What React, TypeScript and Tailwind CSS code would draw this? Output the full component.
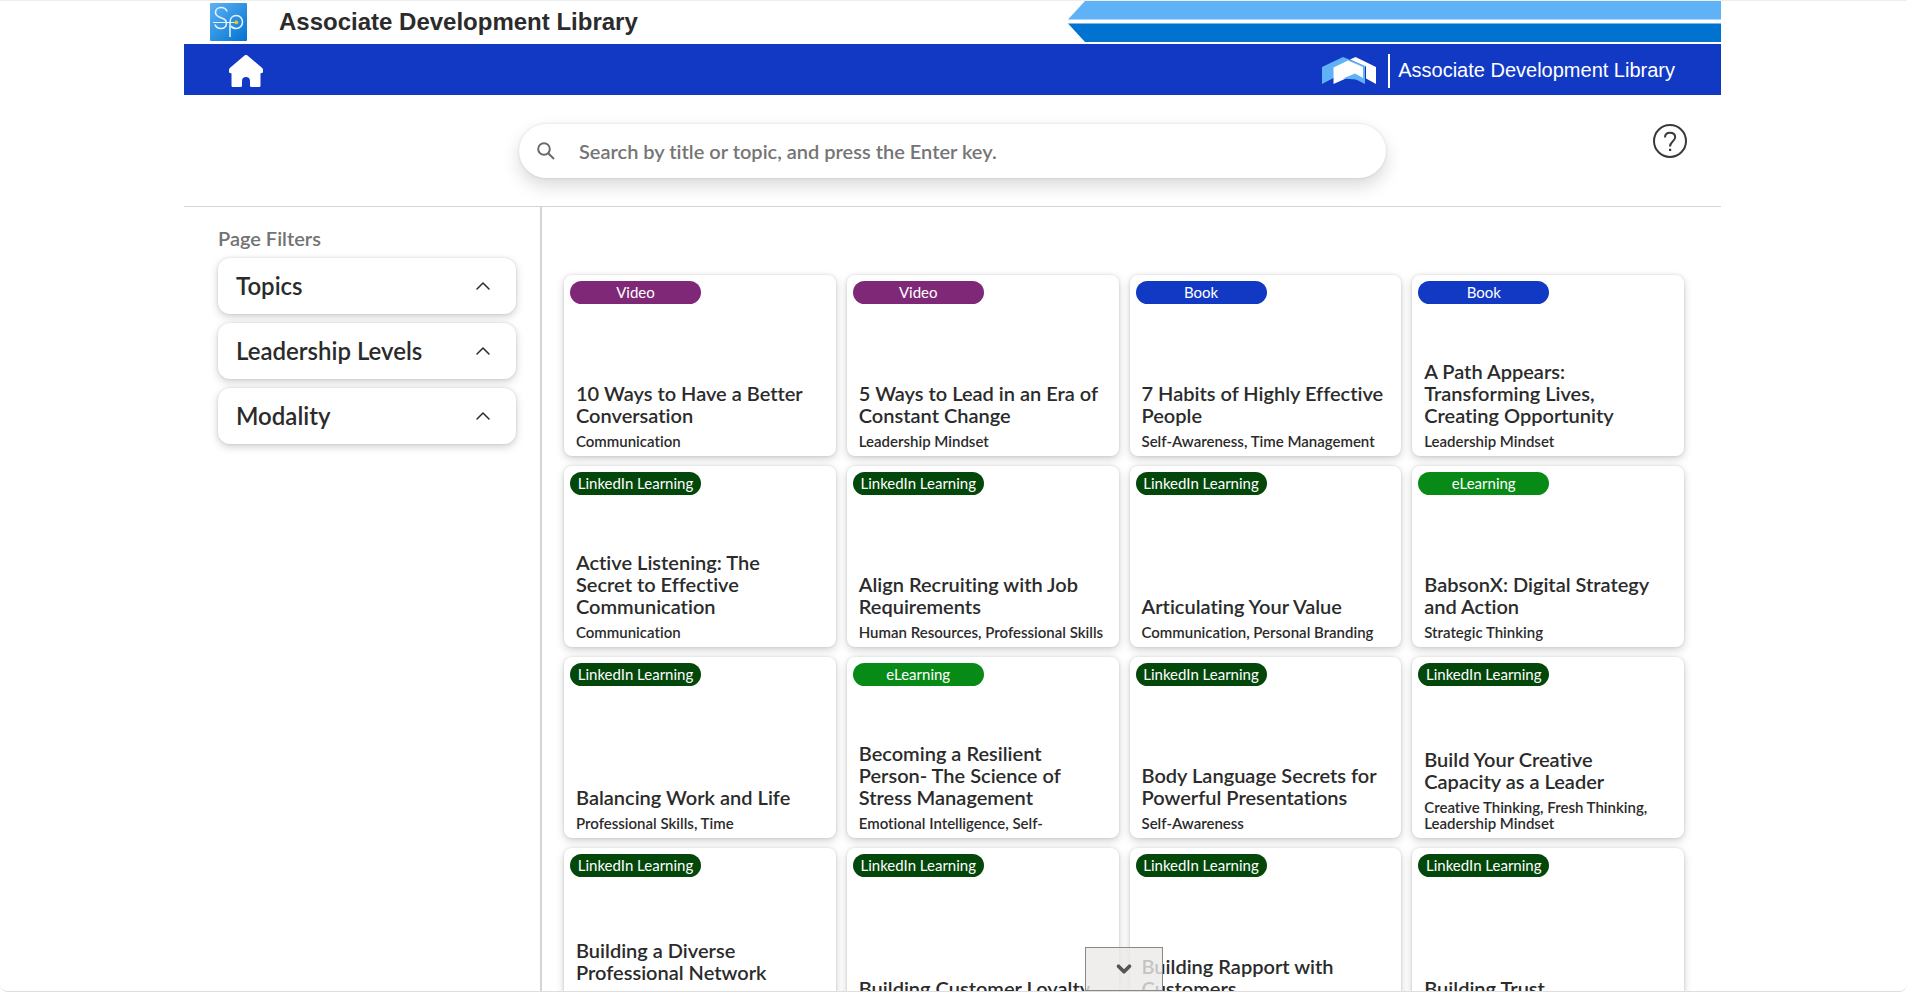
import { ChevronDown, ChevronUp } from "lucide-react";

type Resource = {
    type: "Video" | "Book" | "LinkedIn Learning" | "eLearning";
    title: string;
    topics: string;
    tallTopics?: boolean;
};

const badgeColors = {
    "Video": "bg-[#7f2877]",
    "Book": "bg-[#1239c4]",
    "LinkedIn Learning": "bg-[#04470b]",
    "eLearning": "bg-[#088a17]",
};

const filters = ["Topics", "Leadership Levels", "Modality"];

const resources: Resource[] = [
    { type: "Video", title: "10 Ways to Have a Better Conversation", topics: "Communication" },
    { type: "Video", title: "5 Ways to Lead in an Era of Constant Change", topics: "Leadership Mindset" },
    { type: "Book", title: "7 Habits of Highly Effective People", topics: "Self-Awareness, Time Management" },
    { type: "Book", title: "A Path Appears: Transforming Lives, Creating Opportunity", topics: "Leadership Mindset" },
    { type: "LinkedIn Learning", title: "Active Listening: The Secret to Effective Communication", topics: "Communication" },
    { type: "LinkedIn Learning", title: "Align Recruiting with Job Requirements", topics: "Human Resources, Professional Skills" },
    { type: "LinkedIn Learning", title: "Articulating Your Value", topics: "Communication, Personal Branding" },
    { type: "eLearning", title: "BabsonX: Digital Strategy and Action", topics: "Strategic Thinking" },
    { type: "LinkedIn Learning", title: "Balancing Work and Life", topics: "Professional Skills, Time" },
    { type: "eLearning", title: "Becoming a Resilient Person- The Science of Stress Management", topics: "Emotional Intelligence, Self-" },
    { type: "LinkedIn Learning", title: "Body Language Secrets for Powerful Presentations", topics: "Self-Awareness" },
    { type: "LinkedIn Learning", title: "Build Your Creative Capacity as a Leader", topics: "Creative Thinking, Fresh Thinking, Leadership Mindset" },
    { type: "LinkedIn Learning", title: "Building a Diverse Professional Network", topics: "", tallTopics: true },
    { type: "LinkedIn Learning", title: "Building Customer Loyalty", topics: "" },
    { type: "LinkedIn Learning", title: "Building Rapport with Customers", topics: "" },
    { type: "LinkedIn Learning", title: "Building Trust", topics: "" },
];

const SpLogo = () => (
    <svg width="37" height="38" viewBox="0 0 37 38" fill="none" aria-hidden="true">
        <defs>
            <linearGradient id="sp" x1="0" y1="0" x2="1" y2="1">
                <stop offset="0" stopColor="#5fb2f5" />
                <stop offset="1" stopColor="#0073d0" />
            </linearGradient>
        </defs>
        <rect width="37" height="38" rx="1" fill="url(#sp)" />
        <g stroke="#e3f2fd" strokeWidth="1.6">
            <path d="M17 8.500C16 5.500 13.500 4.500 11 4.500C7.500 4.500 5.500 7 5.500 9.500C5.500 13 8.500 14 11.500 15C14.500 16 16.500 17.500 16.500 20C16.500 23.500 14 25.500 11 25.500C8 25.500 6 24.500 5 21.500" />
            <path d="M20 34V19.500C20 15.500 22.500 12.500 26.200 12.500C30 12.500 32.500 15.500 32.500 19C32.500 22.500 30 25.500 26.200 25.500C24 25.500 22 24.500 21 23" />
            <path d="M3 19.500H25" strokeWidth="1.200" />
        </g>
        <circle cx="26.300" cy="19.300" r="1.900" fill="#ffc20e" />
    </svg>
);

const HomeIcon = () => (
    <svg width="34" height="32" viewBox="0 0 34 32" fill="#fff" aria-hidden="true">
        <path d="M15.500 0.600a2.200 2.200 0 0 1 3 0L33.200 13c.6.500.8 1.200.8 2v1.500c0 1-.7 1.700-1.700 1.700H31.500V30.500c0 1-.6 1.500-1.500 1.500H22.500c-.9 0-1.500-.6-1.500-1.500V26c0-2.500-1.500-4-4-4s-4 1.500-4 4v4.500c0 .9-.6 1.500-1.500 1.500H4c-.9 0-1.500-.5-1.500-1.500V18.200H1.700C.7 18.200 0 17.500 0 16.500V15c0-.8.2-1.500.8-2Z" />
    </svg>
);

const BrandIcon = () => (
    <svg width="54" height="27" viewBox="0 0 54 27" aria-hidden="true">
        <path d="M0 10 21 0 43 9V27L21 16 0 27Z" fill="#5fb2f5" />
        <path d="M28 2.500 33.500 0 54 10V27L44 21.500V9.500Z" fill="#fff" />
        <path d="M11.500 10.500 26 3.500 41 10V22.500L33 17.500 11.500 27Z" fill="#fff" />
        <path d="M21 21.500 33 16.500 41 21V23Z" fill="#5fb2f5" />
    </svg>
);

const SearchIcon = () => (
    <svg width="18" height="18" viewBox="0 0 18 18" fill="none" stroke="#6b6b6b" strokeWidth="2" aria-hidden="true">
        <circle cx="7" cy="7" r="5.800" />
        <path d="M11.200 11.200 17 17" />
    </svg>
);

const HelpIcon = () => (
    <svg width="34" height="34" viewBox="0 0 34 34" fill="none" stroke="#3b3a39" strokeWidth="2" aria-hidden="true">
        <circle cx="17" cy="17" r="16" />
        <path d="M12 13.500C12 10.500 14 8.800 17 8.800S22.200 10.500 22.200 13.300C22.200 17 17 17.500 17 22.500" />
        <rect x="16" y="24.800" width="2.200" height="2.200" fill="#3b3a39" stroke="none" />
    </svg>
);

const Header = () => {
    return (
        <header>
            <div className="flex h-[43px] justify-between">
                <div className="flex items-center gap-8 pb-0.5 pl-[26px]">
                    <SpLogo />
                    <h1 className="font-['Liberation_Sans',sans-serif] text-2xl font-bold text-[#2b2b2b]">
                        Associate Development Library
                    </h1>
                </div>
                <svg width="653" height="41" viewBox="0 0 653 41" aria-hidden="true">
                    <path d="M17 0H653V18.500H0Z" fill="#5fb2f5" />
                    <path d="M0 22.500H653V41H17Z" fill="#0073d0" />
                </svg>
            </div>
            <nav className="flex h-[51px] items-center justify-between bg-[#1239c4] pt-0.5 pr-[46px] pl-[45px]">
                <a href="#home" aria-label="Home">
                    <HomeIcon />
                </a>
                <div className="flex items-center">
                    <BrandIcon />
                    <span className="ml-3 h-[34px] w-0.5 bg-white" />
                    <span className="ml-2 pb-0.5 font-['Liberation_Sans',sans-serif] text-xl text-white">
                        Associate Development Library
                    </span>
                </div>
            </nav>
        </header>
    );
};

const SearchSection = () => {
    return (
        <div className="grid grid-cols-[1fr_867px_1fr] border-b border-[#d2d5d8] pt-[29px] pb-7">
            <label className="col-start-2 flex h-[54px] items-center gap-6 rounded-full bg-white pl-[18px] shadow-[0_8px_18px_rgba(0,0,0,0.15),0_0_3px_rgba(0,0,0,0.12)]">
                <SearchIcon />
                <input
                    type="text"
                    aria-label="Search"
                    placeholder="Search by title or topic, and press the Enter key."
                    className="flex-1 text-xl font-semibold outline-none [font-variant-ligatures:none] placeholder:text-[#757575]"
                />
            </label>
            <button className="mr-[34px] h-[34px] w-[34px] justify-self-end" aria-label="Help">
                <HelpIcon />
            </button>
        </div>
    );
};

const FilterSection = () => {
    return (
        <aside className="w-[358px] shrink-0 border-r-2 border-[#d2d5d8] pt-[18px] pr-6 pl-[34px]">
            <h2 className="mb-[7px] text-xl leading-[26px] font-semibold text-[#737373]">Page Filters</h2>
            <div className="flex flex-col gap-[9px]">
                {filters.map((filter) => (
                    <button
                        key={filter}
                        className="flex h-14 items-center justify-between rounded-xl bg-white pr-[21px] pl-[18px] text-2xl font-semibold shadow-[0_3px_8px_rgba(0,0,0,0.18),0_0_3px_rgba(0,0,0,0.12)]"
                    >
                        {filter}
                        <ChevronUp size={24} strokeWidth={1.5} />
                    </button>
                ))}
            </div>
        </aside>
    );
};

const ResourceCard = ({ type, title, topics, tallTopics }: Resource) => {
    return (
        <article className="flex h-[181px] flex-col justify-between rounded-lg bg-white px-1.5 pt-1.5 pb-[7px] shadow-[0_3px_8px_rgba(0,0,0,0.18),0_0_3px_rgba(0,0,0,0.12)]">
            <span className={`h-[23px] w-[131px] rounded-full text-center text-[15px] leading-[22px] text-white ${badgeColors[type]}`}>
                {type}
            </span>
            <div className="pl-1.5">
                <h3 className="pr-2.5 text-xl leading-[22px] font-semibold">{title}</h3>
                <p className={`mt-[7px] text-[15px] leading-4 font-semibold ${tallTopics ? "min-h-8" : "min-h-4"}`}>{topics}</p>
            </div>
        </article>
    );
};

const App = () => {
    return (
        <div className="relative h-screen overflow-hidden rounded-b-lg border-t border-b border-t-[#eeeeee] border-b-[#dedede] bg-white pr-0.5 font-[Lato,sans-serif] text-[#2b2b2b] [font-variant-ligatures:none]">
            <div className="mx-auto max-w-[1537px]">
                <Header />
                <SearchSection />
                <div className="flex">
                    <FilterSection />
                    <main className="grid flex-1 grid-cols-4 gap-x-[11px] gap-y-2.5 pt-[68px] pr-[37px] pl-[22px]">
                        {resources.map((resource) => (
                            <ResourceCard key={resource.title} {...resource} />
                        ))}
                    </main>
                </div>
            </div>
            <button
                className="absolute bottom-0 left-[1085px] flex h-11 w-[78px] items-center justify-center border border-[#8a8886] bg-[#ebeae8]/80"
                aria-label="Scroll down"
            >
                <ChevronDown size={22} strokeWidth={4} color="#555" />
            </button>
        </div>
    );
};

export default App;
